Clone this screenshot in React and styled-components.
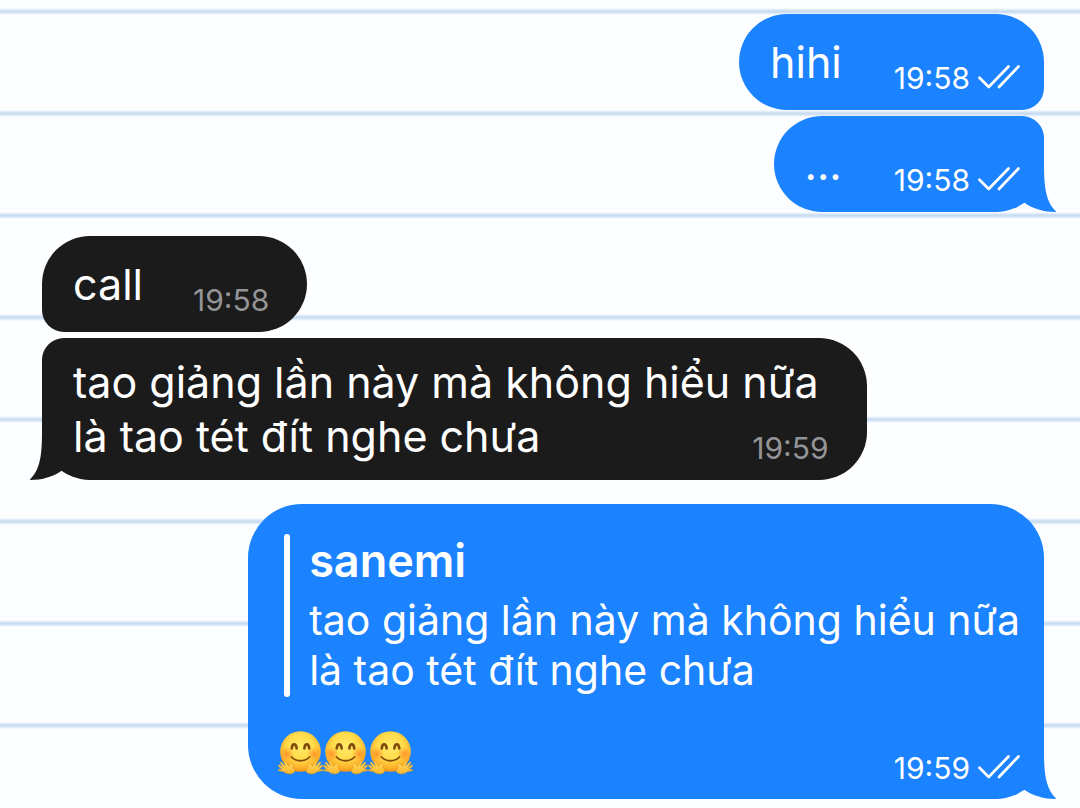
import React from "react";
import styled, { createGlobalStyle, css } from "styled-components";

const GlobalStyle = createGlobalStyle`
  * { box-sizing: border-box; }
  body {
    margin: 0;
    font-family: Inter, "Noto Sans", "Liberation Sans", sans-serif;
    color: #fff;
  }
`;

const Chat = styled.main`
  display: flex;
  flex-direction: column;
  gap: 24px;
  min-height: 100vh;
  padding: 14px 36px 9px 42px;
  background: #fdfeff
    linear-gradient(
      #fdfeff 0 7px,
      #eaf4fe 8px,
      #c9dcf0 10px,
      #c9dcf0 11px,
      #eaf4fe 13px,
      #fdfeff 14px
    )
    0 1px / 100% 102px;
`;

const Group = styled.section`
  display: flex;
  flex-direction: column;
  gap: 6px;
  align-items: ${(p) => (p.$own ? "flex-end" : "flex-start")};
`;

const corners = {
  ownFirst: "48px 48px 22px 48px",
  ownLast: "48px 22px 48px 48px",
  ownSingle: "54px 54px 48px 54px",
  otherFirst: "48px 48px 48px 22px",
  otherLast: "22px 48px 48px 48px",
};

const Bubble = styled.article`
  position: relative;
  max-width: 100%;
  border-radius: ${(p) => corners[p.$shape]};
  background: ${(p) => (p.$own ? "#1b83ff" : "#1b1b1b")};
  ${(p) =>
    p.$stacked
      ? css`
          display: grid;
          padding: 17px 38px 17px 31px;
          & > * { grid-area: 1 / 1; }
        `
      : css`
          display: flex;
          gap: ${p.$own ? "52px" : "50px"};
          padding: 21px ${p.$own ? "24px" : "38px"} 21px 31px;
        `}
`;

const QuoteBubble = styled(Bubble)`
  flex-direction: column;
  gap: 32px;
  padding: 30px 24px 20px 30px;
`;

const Message = styled.p`
  margin: 0;
  padding-right: ${(p) => (p.$stacked ? "10px" : "0")};
  font-size: 43px;
  line-height: 54px;
`;

const Meta = styled.footer`
  display: flex;
  align-items: center;
  align-self: end;
  justify-self: end;
  gap: 8px;
  height: 32px;
  margin-bottom: ${(p) => (p.$stacked ? "-1px" : "-5px")};
  font-size: 30px;
  line-height: 32px;
  color: ${(p) => (p.$own ? "#fff" : "#949496")};
`;

const Quote = styled.blockquote`
  margin: 0 0 0 6px;
  padding-left: 25px;
  position: relative;
  font-size: 41px;
  line-height: 50px;

  &::before {
    content: "";
    position: absolute;
    inset: 0 auto 0 0;
    width: 6px;
    border-radius: 3px;
    background: #fff;
  }
`;

const QuoteAuthor = styled.cite`
  display: block;
  font-size: 45px;
  line-height: 54px;
  font-style: normal;
  font-weight: 600;
`;

const QuoteText = styled.p`
  margin: 0;
  padding: 7px 0 2px;
`;

const QuoteFooter = styled.div`
  display: flex;
  justify-content: space-between;
  height: 50px;
`;

const Emojis = styled.div`
  display: flex;
  align-items: flex-start;
`;

const TailShape = styled.svg`
  position: absolute;
  bottom: 0;
  width: 36px;
  height: 48px;
  ${(p) => (p.$own ? "right: -12px;" : "left: -12px; transform: scaleX(-1);")}
`;

function Tail({ own }) {
  return (
    <TailShape $own={own} viewBox="0 0 36 48" aria-hidden="true">
      <path
        d="M24 0C24 24 26 38 36.5 48C24 48 13 45 4 38.5V0Z"
        fill={own ? "#1b83ff" : "#1b1b1b"}
      />
    </TailShape>
  );
}

function ReadTicks() {
  return (
    <svg width="42" height="26" viewBox="0 0 42 26" fill="none" stroke="#fff" strokeWidth="2.7" strokeLinecap="round" strokeLinejoin="round" role="img" aria-label="Read">
      <path d="M1.5 12.8L10.7 22L30.5 1.5M21 22L40.5 1.5" />
    </svg>
  );
}

function HugHand() {
  return (
    <path
      d="M16 43.5C12 46 8 44.7 5.5 42.6L1 41.8C-.2 41.5 .1 40.5 1.2 40.5L4 40.6L.6 37.2C-.2 36.2 .9 35.5 1.8 36.2L5 38.5L2.3 34.1C1.8 33 3 32.5 3.7 33.4L7.2 37.1L6.5 32.8C6.4 31.4 7.8 31.4 8.2 32.7L10.2 37.2C12 36 13.3 34.1 14.6 34.5C16 35 14.9 37.4 15 38.7C16.7 40.2 17.3 42 16 43.5Z"
      fill="url(#hugHand)"
      stroke="#e59a18"
      strokeWidth=".6"
    />
  );
}

function HuggingFace() {
  return (
    <svg width="45" height="46" viewBox="0 0 45 46" role="img" aria-label="🤗">
      <defs>
        <radialGradient id="hugFace" cx=".5" cy=".38" r=".64">
          <stop offset="0" stopColor="#ffeb68" />
          <stop offset=".5" stopColor="#ffdb4a" />
          <stop offset=".8" stopColor="#ffb52c" />
          <stop offset="1" stopColor="#ee8b12" />
        </radialGradient>
        <radialGradient id="hugCheek">
          <stop offset="0" stopColor="#ff7920" stopOpacity=".65" />
          <stop offset="1" stopColor="#ff7920" stopOpacity="0" />
        </radialGradient>
        <linearGradient id="hugHand" x1="0" y1="0" x2="0" y2="1">
          <stop offset="0" stopColor="#ffe06a" />
          <stop offset="1" stopColor="#fbb52b" />
        </linearGradient>
      </defs>
      <circle cx="22.5" cy="22.5" r="20.3" fill="url(#hugFace)" />
      <circle cx="9" cy="25" r="7" fill="url(#hugCheek)" />
      <circle cx="36" cy="25" r="7" fill="url(#hugCheek)" />
      <g fill="none" stroke="#814b0c" strokeLinecap="round">
        <path d="M13.7 19.5C14.3 14 18 14 18.7 19.5M26.3 19.5C27 14 30.7 14 31.3 19.5" strokeWidth="2.6" />
        <path d="M13.5 28C18 33 27 33 31.5 28" strokeWidth="1.8" />
      </g>
      <HugHand />
      <g transform="translate(45 0) scale(-1 1)">
        <HugHand />
      </g>
    </svg>
  );
}

function Stamp({ time, own, stacked }) {
  return (
    <Meta $own={own} $stacked={stacked}>
      <time>{time}</time>
      {own && <ReadTicks />}
    </Meta>
  );
}

export default function App() {
  return (
    <>
      <GlobalStyle />
      <Chat>
        <Group $own>
          <Bubble $own $shape="ownFirst">
            <Message>hihi</Message>
            <Stamp own time="19:58" />
          </Bubble>
          <Bubble $own $shape="ownLast">
            <Message>...</Message>
            <Stamp own time="19:58" />
            <Tail own />
          </Bubble>
        </Group>

        <Group>
          <Bubble $shape="otherFirst">
            <Message>call</Message>
            <Stamp time="19:58" />
          </Bubble>
          <Bubble $shape="otherLast" $stacked>
            <Message $stacked>
              tao giảng lần này mà không hiểu nữa
              <br />
              là tao tét đít nghe chưa
            </Message>
            <Stamp time="19:59" stacked />
            <div>
              <Tail />
            </div>
          </Bubble>
        </Group>

        <Group $own>
          <QuoteBubble $own $shape="ownSingle">
            <Quote>
              <QuoteAuthor>sanemi</QuoteAuthor>
              <QuoteText>
                tao giảng lần này mà không hiểu nữa
                <br />
                là tao tét đít nghe chưa
              </QuoteText>
            </Quote>
            <QuoteFooter>
              <Emojis>
                <HuggingFace />
                <HuggingFace />
                <HuggingFace />
              </Emojis>
              <Stamp own time="19:59" />
            </QuoteFooter>
            <Tail own />
          </QuoteBubble>
        </Group>
      </Chat>
    </>
  );
}
